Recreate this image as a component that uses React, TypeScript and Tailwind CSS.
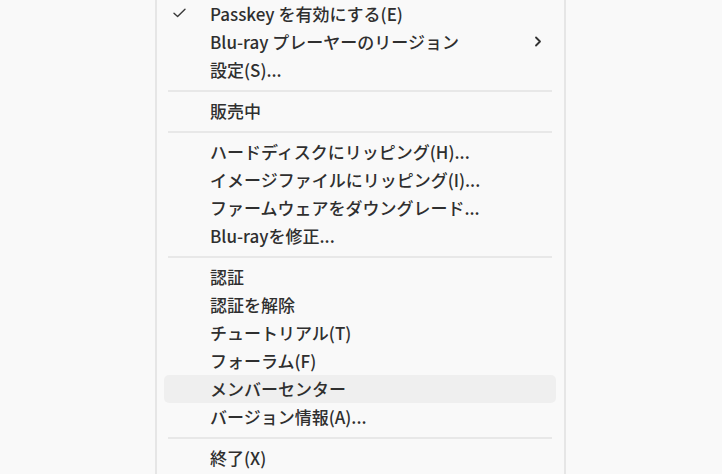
import React from "react";

type Entry =
  | { kind: "item"; label: string; checked?: boolean; submenu?: boolean; hover?: boolean }
  | { kind: "sep" };

const entries: Entry[] = [
  { kind: "item", label: "Passkey を有効にする(E)", checked: true },
  { kind: "item", label: "Blu-ray プレーヤーのリージョン", submenu: true },
  { kind: "item", label: "設定(S)..." },
  { kind: "sep" },
  { kind: "item", label: "販売中" },
  { kind: "sep" },
  { kind: "item", label: "ハードディスクにリッピング(H)..." },
  { kind: "item", label: "イメージファイルにリッピング(I)..." },
  { kind: "item", label: "ファームウェアをダウングレード..." },
  { kind: "item", label: "Blu-rayを修正..." },
  { kind: "sep" },
  { kind: "item", label: "認証" },
  { kind: "item", label: "認証を解除" },
  { kind: "item", label: "チュートリアル(T)" },
  { kind: "item", label: "フォーラム(F)" },
  { kind: "item", label: "メンバーセンター", hover: true },
  { kind: "item", label: "バージョン情報(A)..." },
  { kind: "sep" },
  { kind: "item", label: "終了(X)" },
];

const CheckIcon = () => (
  <svg width="13" height="10" viewBox="0 0 13 10" fill="none">
    <path d="M1 5.2 L4.6 8.6 L12 1.2" stroke="#3a3a3a" strokeWidth="1.4" strokeLinecap="round" strokeLinejoin="round" />
  </svg>
);

const ChevronIcon = () => (
  <svg width="8" height="11" viewBox="0 0 8 11" fill="none">
    <path d="M2 1.5 L6 5.5 L2 9.5" stroke="#333" strokeWidth="1.8" strokeLinecap="round" strokeLinejoin="round" />
  </svg>
);

export default function App() {
  return (
    <div className="w-[722px] h-[474px] overflow-hidden bg-[#f9f9f9] pl-[155px]">
      <div className="w-[411px] h-full border-x-2 border-[#e6e6e6] bg-[#f9f9f9] pl-[7px] pr-[8px]">
        {entries.map((e, i) =>
          e.kind === "sep" ? (
            <div key={i} className="h-[13px] flex items-center px-[4px]">
              <div className="w-full h-[2px] bg-[#e8e8e8]" />
            </div>
          ) : (
            <div
              key={i}
              className={`h-[28px] pb-[2px] flex items-center rounded-[5px] ${e.hover ? "bg-[#efefef]" : ""}`}
            >
              <div className="w-[46px] pl-[9px] flex items-center">{e.checked && <CheckIcon />}</div>
              <span
                className="flex-1 text-[17px] font-medium text-[#2f2f2f] leading-none whitespace-nowrap"
                style={{ fontFamily: '"Noto Sans CJK JP", "Noto Sans", sans-serif' }}
              >
                {e.label}
              </span>
              {e.submenu && (
                <div className="w-[30px] pr-[14px] flex items-center justify-end">
                  <ChevronIcon />
                </div>
              )}
            </div>
          )
        )}
      </div>
    </div>
  );
}
